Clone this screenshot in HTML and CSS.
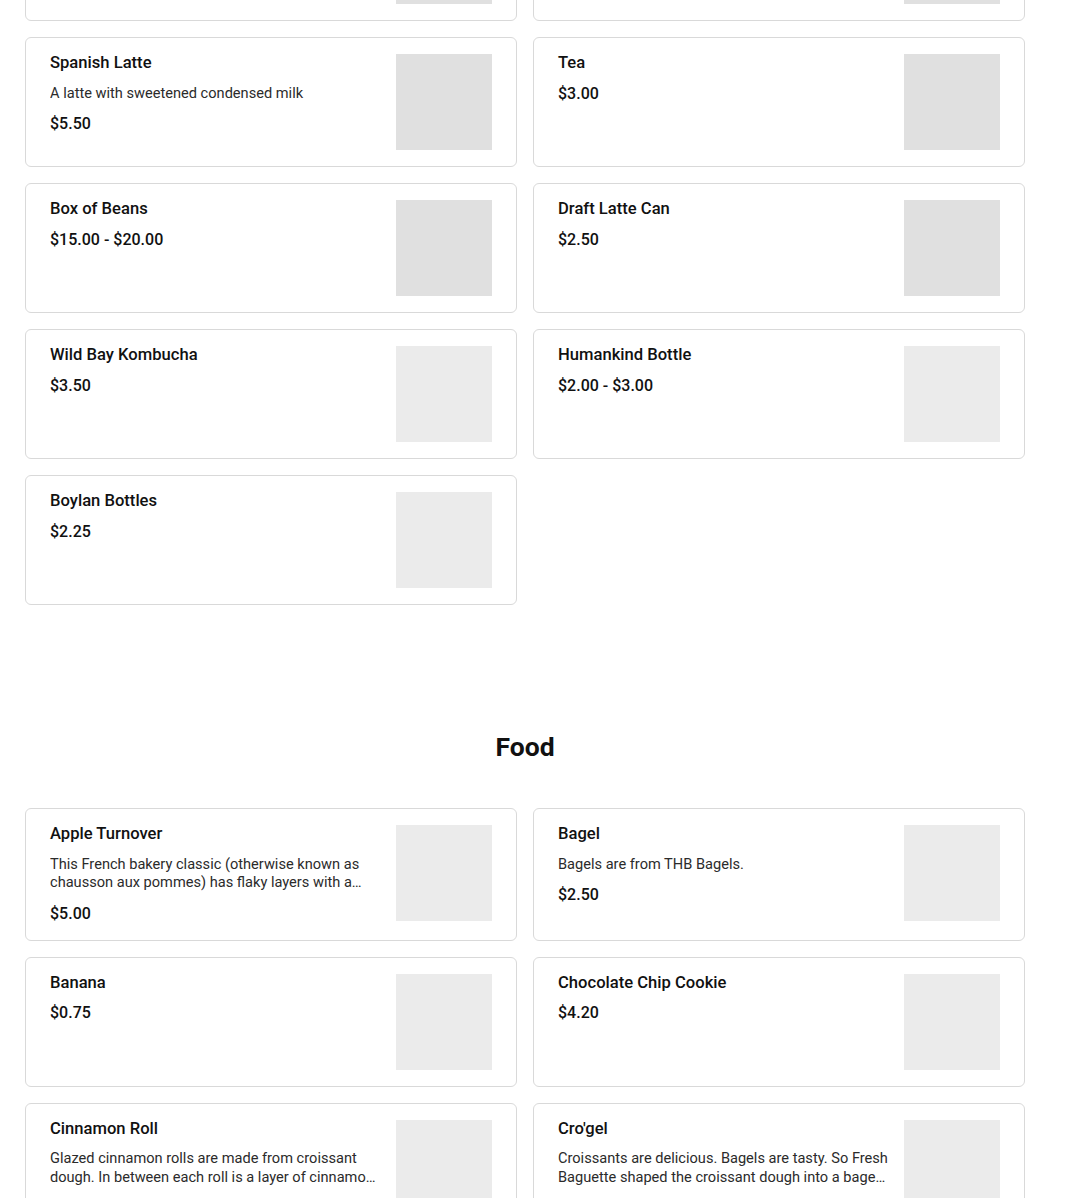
FILE: index.html
```html
<!DOCTYPE html>
<html lang="en">
<head>
<meta charset="utf-8">
<title>Menu</title>
<link rel="stylesheet" href="styles.css">
</head>
<body>
<main class="menu">
  <section class="section section--drinks">
    <div class="grid">
      <article class="card">
        <div class="card__body">
          <h3 class="card__title">Iced Latte</h3>
          <p class="card__price">$5.00</p>
        </div>
        <div class="card__img card__img--dark"></div>
      </article>
      <article class="card">
        <div class="card__body">
          <h3 class="card__title">Cold Brew</h3>
          <p class="card__price">$4.50</p>
        </div>
        <div class="card__img card__img--dark"></div>
      </article>
      <article class="card">
        <div class="card__body">
          <h3 class="card__title">Spanish Latte</h3>
          <p class="card__desc">A latte with sweetened condensed milk</p>
          <p class="card__price">$5.50</p>
        </div>
        <div class="card__img card__img--dark"></div>
      </article>
      <article class="card">
        <div class="card__body">
          <h3 class="card__title">Tea</h3>
          <p class="card__price">$3.00</p>
        </div>
        <div class="card__img card__img--dark"></div>
      </article>
      <article class="card">
        <div class="card__body">
          <h3 class="card__title">Box of Beans</h3>
          <p class="card__price">$15.00 - $20.00</p>
        </div>
        <div class="card__img card__img--dark"></div>
      </article>
      <article class="card">
        <div class="card__body">
          <h3 class="card__title">Draft Latte Can</h3>
          <p class="card__price">$2.50</p>
        </div>
        <div class="card__img card__img--dark"></div>
      </article>
      <article class="card">
        <div class="card__body">
          <h3 class="card__title">Wild Bay Kombucha</h3>
          <p class="card__price">$3.50</p>
        </div>
        <div class="card__img"></div>
      </article>
      <article class="card">
        <div class="card__body">
          <h3 class="card__title">Humankind Bottle</h3>
          <p class="card__price">$2.00 - $3.00</p>
        </div>
        <div class="card__img"></div>
      </article>
      <article class="card">
        <div class="card__body">
          <h3 class="card__title">Boylan Bottles</h3>
          <p class="card__price">$2.25</p>
        </div>
        <div class="card__img"></div>
      </article>
    </div>
  </section>

  <section class="section section--food">
    <h2 class="section__title">Food</h2>
    <div class="grid">
      <article class="card">
        <div class="card__body">
          <h3 class="card__title">Apple Turnover</h3>
          <p class="card__desc">This French bakery classic (otherwise known as chausson aux pommes) has flaky layers with a buttery apple filling baked inside.</p>
          <p class="card__price">$5.00</p>
        </div>
        <div class="card__img"></div>
      </article>
      <article class="card">
        <div class="card__body">
          <h3 class="card__title">Bagel</h3>
          <p class="card__desc">Bagels are from THB Bagels.</p>
          <p class="card__price">$2.50</p>
        </div>
        <div class="card__img"></div>
      </article>
      <article class="card">
        <div class="card__body">
          <h3 class="card__title">Banana</h3>
          <p class="card__price">$0.75</p>
        </div>
        <div class="card__img"></div>
      </article>
      <article class="card">
        <div class="card__body">
          <h3 class="card__title">Chocolate Chip Cookie</h3>
          <p class="card__price">$4.20</p>
        </div>
        <div class="card__img"></div>
      </article>
      <article class="card">
        <div class="card__body">
          <h3 class="card__title">Cinnamon Roll</h3>
          <p class="card__desc">Glazed cinnamon rolls are made from croissant dough. In between each roll is a layer of cinnamon sugar and butter.</p>
          <p class="card__price">$4.50</p>
        </div>
        <div class="card__img"></div>
      </article>
      <article class="card">
        <div class="card__body">
          <h3 class="card__title">Cro'gel</h3>
          <p class="card__desc">Croissants are delicious. Bagels are tasty. So Fresh Baguette shaped the croissant dough into a bagel and topped it with seeds.</p>
          <p class="card__price">$4.75</p>
        </div>
        <div class="card__img"></div>
      </article>
    </div>
  </section>
</main>
</body>
</html>
```

FILE: styles.css
```css
* { box-sizing: border-box; }

html, body {
  margin: 0;
  padding: 0;
  background: #ffffff;
}

body {
  font-family: Roboto, "Liberation Sans", Arial, sans-serif;
  color: #1a1a1a;
  overflow: hidden;
}

.menu {
  width: 1000px;
  margin: -109px 0 0 25px;
}

.grid {
  display: grid;
  grid-template-columns: 492px 492px;
  column-gap: 16px;
  row-gap: 16px;
  align-items: stretch;
}

.section--food {
  margin-top: 126px;
}

.section__title {
  margin: 0 0 45px;
  text-align: center;
  font-size: 26.5px;
  line-height: 32px;
  font-weight: 700;
  color: #111111;
}

.card {
  display: flex;
  align-items: flex-start;
  gap: 16px;
  min-height: 130px;
  padding: 16px 24px;
  border: 1px solid #d9d9d9;
  border-radius: 6px;
  background: #ffffff;
}

.card__body {
  flex: 1 1 auto;
  min-width: 0;
}

.card__title {
  margin: 0 0 11.5px;
  font-size: 16.6px;
  line-height: 18px;
  font-weight: 500;
  color: #111111;
}

.card__desc {
  margin: 0 0 12px;
  font-size: 14.6px;
  line-height: 18.5px;
  font-weight: 400;
  color: #2b2b2b;
  display: -webkit-box;
  -webkit-box-orient: vertical;
  -webkit-line-clamp: 2;
  overflow: hidden;
}

.card__price {
  margin: 0;
  font-size: 16px;
  line-height: 20px;
  font-weight: 500;
  color: #111111;
}

.card__img {
  flex: 0 0 96px;
  width: 96px;
  height: 96px;
  background: #ebebeb;
}

.card__img--dark {
  background: #e0e0e0;
}
```
